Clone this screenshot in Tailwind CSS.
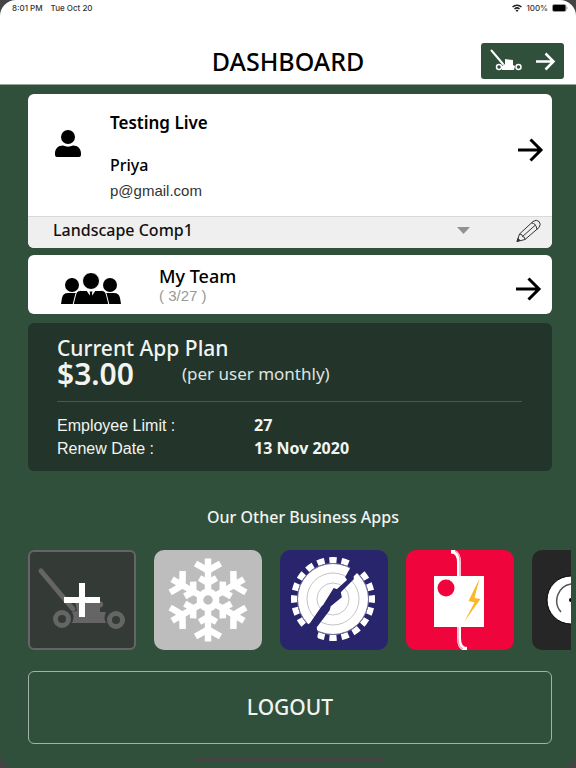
<!DOCTYPE html>
<html lang="en">
<head>
    <meta charset="UTF-8">
    <meta name="viewport" content="width=device-width, initial-scale=1.0">
    <title>Dashboard</title>
    <script src="https://cdn.jsdelivr.net/npm/@tailwindcss/browser@4"></script>
</head>
<body class="bg-[#444444] font-['Noto_Sans',sans-serif] text-black">
    <div class="flex min-h-screen flex-col overflow-hidden rounded-2xl bg-[#31503c]">
        <header class="border-b border-[#9aa79e] bg-white">
            <!-- Status bar -->
            <div class="flex h-4 items-center justify-between pr-2 pl-3 font-[Inter,sans-serif] text-[8px] font-medium text-[#333333]">
                <div class="flex gap-2">
                    <span>8:01 PM</span>
                    <span>Tue Oct 20</span>
                </div>
                <div class="flex items-center gap-1">
                    <svg class="h-2 w-2.5" viewBox="0 0 20 16" fill="none" stroke="#222" stroke-width="3" aria-hidden="true">
                        <path d="M1 6a13 13 0 0 1 18 0M5 10a7.500 7.500 0 0 1 10 0" />
                        <path d="M10 16l-3-3.500a5 5 0 0 1 6 0z" fill="#222" stroke="none" />
                    </svg>
                    <span>100%</span>
                    <svg class="h-2 w-4" viewBox="0 0 16 8" aria-hidden="true">
                        <rect x="0.500" y="0.500" width="13.500" height="7" rx="1.500" fill="none" stroke="#999" />
                        <rect x="1" y="1" width="12.500" height="6" rx="1" fill="#000" />
                        <path d="M15 3v2" stroke="#999" />
                    </svg>
                </div>
            </div>
            <div class="grid grid-cols-[1fr_auto_1fr] items-center px-3 pt-[26px] pb-1">
                <h1 class="col-start-2 text-[25px] leading-[38px] font-medium">DASHBOARD</h1>
                <a href="#" class="flex h-9 w-[83px] items-center justify-self-end rounded-[3px] bg-[#31503c]" aria-label="Open mower app">
                    <svg class="h-9 w-full" viewBox="0 0 83 36" fill="none" stroke="#fff" aria-hidden="true">
                        <path d="M10.500 7.500L22 21" stroke-width="2" stroke-linecap="round" />
                        <path d="M24 16l8 1v5l2 1-1 4H21v-4l3-2z" fill="#fff" stroke="none" />
                        <circle cx="18" cy="24" r="2.500" stroke-width="1.500" fill="#31503c" />
                        <circle cx="37.500" cy="24" r="2.500" stroke-width="1.500" fill="#31503c" />
                        <path d="M55 18.500h17M64.500 10.500l8 8-8 8" stroke-width="2.500" />
                    </svg>
                </a>
            </div>
        </header>

        <main class="flex flex-1 flex-col pt-[9px] pr-6 pl-7">
            <!-- Profile -->
            <section class="overflow-hidden rounded-md bg-white">
                <div class="flex h-[122px] items-center pr-2 pl-[27px]">
                    <svg class="-mt-6 h-[27px] w-[26px] shrink-0" viewBox="0 0 26 27" aria-hidden="true">
                        <circle cx="13" cy="7" r="7" />
                        <path d="M8 15.500c3 1.500 7 1.500 10 0 5 0 8 3.500 8 8V25q0 2-2 2H2q-2 0-2-2v-1.500c0-4.500 3-8 8-8z" />
                    </svg>
                    <div class="mt-0.5 ml-[29px] flex-1">
                        <h2 class="text-[17px] leading-6 font-semibold">Testing Live</h2>
                        <p class="mt-[18px] text-base leading-6 font-medium">Priya</p>
                        <p class="mt-1 font-['Liberation_Sans',sans-serif] text-[15px] leading-5 text-[#333333]">p@gmail.com</p>
                    </div>
                    <a href="#" aria-label="Open profile">
                        <svg class="-mt-2.5 h-6 w-[26px]" viewBox="0 0 26 24" fill="none" stroke="#000" stroke-width="3" aria-hidden="true">
                            <path d="M0 12h23M12.500 1.500L23 12 12.500 22.500" />
                        </svg>
                    </a>
                </div>
                <div class="flex h-8 items-start border-t border-[#d9d9d9] bg-[#efefef] pr-[11px] pl-[25px]">
                    <div class="grid flex-1 items-center">
                        <select aria-label="Company" class="col-start-1 row-start-1 appearance-none bg-transparent text-base leading-[26px] font-medium text-[#111111]">
                            <option>Landscape Comp1</option>
                        </select>
                        <svg class="pointer-events-none col-start-1 row-start-1 h-[7px] w-[13px] justify-self-end" viewBox="0 0 13 7" fill="#929292" aria-hidden="true">
                            <path d="M0 0h13L6.500 7z" />
                        </svg>
                    </div>
                    <button class="mt-0.5 ml-[46px]" aria-label="Edit company">
                        <svg class="h-6 w-[25px]" viewBox="0 0 25 24" fill="none" stroke="#333" stroke-width="1" stroke-linejoin="round" aria-hidden="true">
                            <path d="M1 22.500l2.500-7.500L17 2.500q3.500-2.500 6 0t0 6L9 20.500z" />
                            <path d="M3.500 15q3 0 3 2.500 2.500 0 2.500 3M6.500 17.500L19.500 6M15.500 4q4.500 0 5.500 6.500" />
                            <path d="M1 22.500l1-3 1.800 1.800z" fill="#222" />
                        </svg>
                    </button>
                </div>
            </section>

            <!-- Team -->
            <a href="#" class="mt-[7px] flex h-[59px] items-center rounded-md bg-white pr-2.5 pl-[33px]">
                <svg class="mt-2 h-[31px] w-[60px] shrink-0" viewBox="0 0 60 31" aria-hidden="true">
                    <circle cx="11" cy="12" r="7" />
                    <circle cx="49" cy="12" r="7" />
                    <path d="M0 31l1-6q1-5 6-5h9v11zM60 31l-1-6q-1-5-6-5h-9v11z" />
                    <circle cx="30" cy="8" r="8.500" stroke="#fff" />
                    <path d="M12 32l2.500-10q1-4.500 5-4.500h21q4 0 5 4.500L48 32z" stroke="#fff" />
                    <path d="M25.500 17.500l4.500 7 4.500-7z" fill="#fff" />
                    <path d="M28.500 18.500h3l-.500 2 1 4-2 4-2-4 1-4z" />
                </svg>
                <div class="ml-[38px] flex-1">
                    <h2 class="text-lg leading-[22px] font-medium">My Team</h2>
                    <p class="font-['Liberation_Sans',sans-serif] text-[15px] leading-[18px] text-[#999999]">( 3/27 )</p>
                </div>
                <svg class="mt-2 h-6 w-[26px]" viewBox="0 0 26 24" fill="none" stroke="#000" stroke-width="3" aria-hidden="true">
                    <path d="M0 12h23M12.500 1.500L23 12 12.500 22.500" />
                </svg>
            </a>

            <!-- Plan -->
            <section class="mt-[9px] h-[148px] rounded-md bg-[#23352a] pt-3 pr-[30px] pl-[29px] text-[#f2f4f2]">
                <h2 class="text-[21px] leading-[26px] font-medium">Current App Plan</h2>
                <div class="flex items-center gap-12 border-b border-[#4b584f] pb-3.5">
                    <span class="text-[30px] leading-[26px] font-semibold">$3.00</span>
                    <span class="text-[17px] leading-6 text-[#dfe3e0]">(per user monthly)</span>
                </div>
                <dl class="mt-3 grid grid-cols-[197px_1fr] text-base leading-[23px]">
                    <dt class="font-['Liberation_Sans',sans-serif]">Employee Limit :</dt>
                    <dd class="font-bold">27</dd>
                    <dt class="font-['Liberation_Sans',sans-serif]">Renew Date :</dt>
                    <dd class="font-bold">13 Nov 2020</dd>
                </dl>
            </section>

            <!-- Other apps -->
            <h2 class="mt-[34px] pl-[26px] text-center text-base leading-6 font-medium text-[#f2f4f2]">Our Other Business Apps</h2>
            <div class="mt-[21px] -mr-[19px] flex gap-[18px] overflow-hidden">
                <button class="h-[100px] w-[108px] shrink-0 overflow-hidden rounded-md border-2 border-[#656565] bg-[#343b37]" aria-label="Add mower app">
                    <svg class="h-full w-full" viewBox="2 2 104 96" fill="none" aria-hidden="true">
                        <path d="M13 21l32 38" stroke="#656565" stroke-width="5" stroke-linecap="round" />
                        <path d="M47 51h24q5 0 4 5l-3 2v4h6q-3 6 0 11H44q3-6 0-11l5-1z" fill="#656565" />
                        <circle cx="34" cy="69" r="6.500" stroke="#656565" stroke-width="5" />
                        <circle cx="88" cy="70" r="6.500" stroke="#656565" stroke-width="5" />
                        <path d="M36 50h36M54 33v34" stroke="#fff" stroke-width="6" />
                    </svg>
                </button>
                <button class="h-[100px] w-[108px] shrink-0 overflow-hidden rounded-[10px] bg-[#bdbdbd]" aria-label="Snow app">
                    <svg class="h-full w-full" viewBox="0 0 108 100" fill="none" stroke="#fff" stroke-width="6.500" aria-hidden="true">
                        <defs>
                            <path id="arm" d="M54 42V8.500M41.500 13.500L54 20.500 66.500 13.500M45.500 28L54 33 62.500 28" />
                        </defs>
                        <use href="#arm" />
                        <use href="#arm" transform="rotate(60 54 50)" />
                        <use href="#arm" transform="rotate(120 54 50)" />
                        <use href="#arm" transform="rotate(180 54 50)" />
                        <use href="#arm" transform="rotate(240 54 50)" />
                        <use href="#arm" transform="rotate(300 54 50)" />
                        <circle cx="54" cy="50" r="8" />
                    </svg>
                </button>
                <button class="h-[100px] w-[108px] shrink-0 overflow-hidden rounded-[10px] bg-[#29256c]" aria-label="Gear app">
                    <svg class="h-full w-full" viewBox="0 0 108 100" fill="none" aria-hidden="true">
                        <circle cx="53" cy="49" r="39" pathLength="200" stroke="#fff" stroke-width="6" stroke-dasharray="6 4" stroke-dashoffset="3" />
                        <circle cx="53" cy="49" r="35.500" fill="#fff" stroke="#77759e" />
                        <circle cx="53" cy="49" r="26" stroke="#c4c4c4" />
                        <circle cx="53" cy="49" r="16" stroke="#c4c4c4" />
                        <path d="M72 4L71 18 66 27 68 30 57 40 54 39 44 55 42 57 31 73 25 78 30 92 37 90 36 77 49 60 50 56 61 47 60 42 73 29V26L77 22 82 20 90 8z" fill="#29256c" stroke="#29256c" stroke-width="1.500" />
                    </svg>
                </button>
                <button class="h-[100px] w-[108px] shrink-0 overflow-hidden rounded-[10px] bg-[#f0043c]" aria-label="Electrical app">
                    <svg class="h-full w-full" viewBox="0 0 108 100" aria-hidden="true">
                        <path d="M45 1.500q8 0 8 11V30M53 74v14q0 11 8 11" fill="none" stroke="#fff" stroke-width="4" />
                        <path d="M49 1q5 2 5 11V30M52 74v14q0 9 5 11" fill="none" stroke="#f0043c" stroke-width="0.500" />
                        <path d="M28 26h50v51H28z" fill="#fff" />
                        <circle cx="40" cy="38" r="8.500" fill="#f0043c" />
                        <path d="M73.500 28.500L62.500 51l6 1.500L58 72l16.500-23-6-1z" fill="#fbb829" />
                    </svg>
                </button>
                <button class="h-[100px] w-[108px] shrink-0 overflow-hidden rounded-[10px] bg-[#262626]" aria-label="Gauge app">
                    <svg class="h-full w-full" viewBox="0 0 108 100" fill="none" aria-hidden="true">
                        <circle cx="39" cy="50" r="24" fill="#fff" stroke="#000" />
                        <path d="M29 62A17 17 0 0 1 39 34a17 17 0 0 1 10 28" stroke="#555" stroke-width="1.500" />
                        <circle cx="39" cy="50" r="2" fill="#000" />
                    </svg>
                </button>
            </div>

            <button class="mt-[21px] h-[73px] w-full rounded-md border border-[#a3b1a7] text-[21px] font-medium text-[#f2f4f2]">LOGOUT</button>
            <div class="mt-3.5 mb-1.5 h-1 w-[190px] self-center rounded-full bg-[#444444]"></div>
        </main>
    </div>
</body>
</html>
